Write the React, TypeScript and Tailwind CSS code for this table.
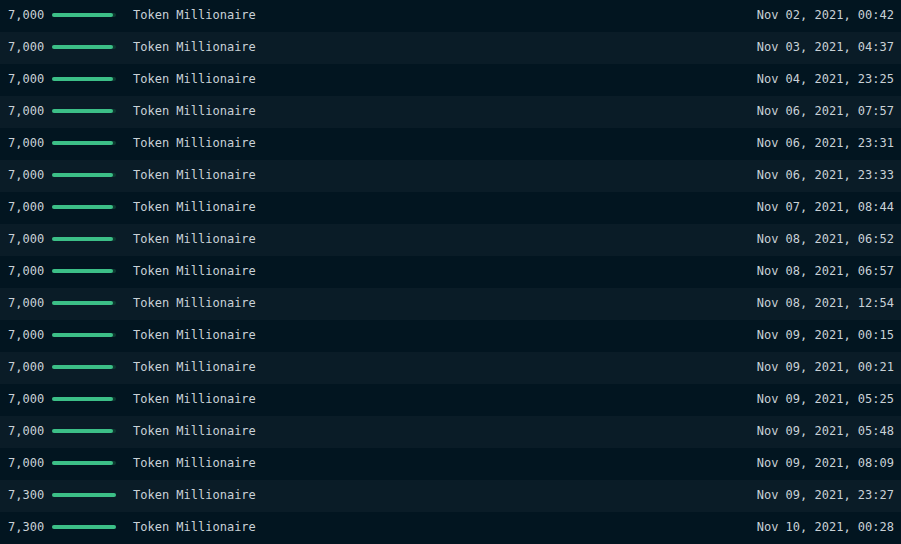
import React from "react";

const rows: [string, string][] = [
  ["7,000", "Nov 02, 2021, 00:42"],
  ["7,000", "Nov 03, 2021, 04:37"],
  ["7,000", "Nov 04, 2021, 23:25"],
  ["7,000", "Nov 06, 2021, 07:57"],
  ["7,000", "Nov 06, 2021, 23:31"],
  ["7,000", "Nov 06, 2021, 23:33"],
  ["7,000", "Nov 07, 2021, 08:44"],
  ["7,000", "Nov 08, 2021, 06:52"],
  ["7,000", "Nov 08, 2021, 06:57"],
  ["7,000", "Nov 08, 2021, 12:54"],
  ["7,000", "Nov 09, 2021, 00:15"],
  ["7,000", "Nov 09, 2021, 00:21"],
  ["7,000", "Nov 09, 2021, 05:25"],
  ["7,000", "Nov 09, 2021, 05:48"],
  ["7,000", "Nov 09, 2021, 08:09"],
  ["7,300", "Nov 09, 2021, 23:27"],
  ["7,300", "Nov 10, 2021, 00:28"],
];

export default function App() {
  return (
    <div
      className="w-[901px] h-[544px] overflow-hidden bg-[#021520] text-[#c9d1d7] text-[12px]"
      style={{ fontFamily: '"DejaVu Sans Mono", "Liberation Mono", monospace' }}
    >
      {rows.map(([amt, date], i) => {
        const val = parseInt(amt.replace(",", ""), 10);
        const pct = (val / 7300) * 100;
        return (
          <div
            key={i}
            className={`flex items-center h-[32px] pl-2 pr-[7px] pb-[2px] ${i % 2 === 1 ? "bg-[#0a1c27]" : "bg-[#021520]"}`}
          >
            <span className="w-[36px]">{amt}</span>
            <div className="ml-2 w-16 h-[4px] rounded-full bg-[#0d3a31]">
              <div className="h-full rounded-full bg-[#3cbf87]" style={{ width: `${pct}%` }} />
            </div>
            <span className="ml-[17px]">Token Millionaire</span>
            <span className="ml-auto">{date}</span>
          </div>
        );
      })}
    </div>
  );
}
